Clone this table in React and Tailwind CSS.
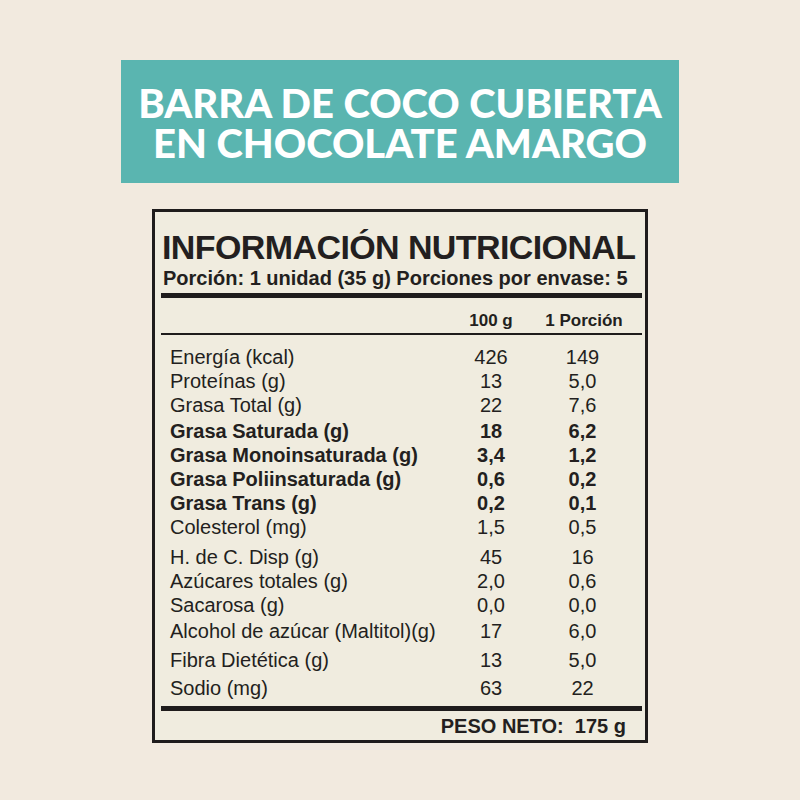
import React from "react";

const rows = [
	{ label: "Energía (kcal)", a: "426", b: "149", gap: "" },
	{ label: "Proteínas (g)", a: "13", b: "5,0", gap: "" },
	{ label: "Grasa Total (g)", a: "22", b: "7,6", gap: "" },
	{ label: "Grasa Saturada (g)", a: "18", b: "6,2", gap: "mt-[2px]", bold: true },
	{ label: "Grasa Monoinsaturada (g)", a: "3,4", b: "1,2", gap: "", bold: true },
	{ label: "Grasa Poliinsaturada (g)", a: "0,6", b: "0,2", gap: "", bold: true },
	{ label: "Grasa Trans (g)", a: "0,2", b: "0,1", gap: "", bold: true },
	{ label: "Colesterol (mg)", a: "1,5", b: "0,5", gap: "" },
	{ label: "H. de C. Disp (g)", a: "45", b: "16", gap: "mt-[6px]" },
	{ label: "Azúcares totales (g)", a: "2,0", b: "0,6", gap: "" },
	{ label: "Sacarosa (g)", a: "0,0", b: "0,0", gap: "" },
	{ label: "Alcohol de azúcar (Maltitol)(g)", a: "17", b: "6,0", gap: "mt-[2px]" },
	{ label: "Fibra Dietética (g)", a: "13", b: "5,0", gap: "mt-[5px]" },
	{ label: "Sodio (mg)", a: "63", b: "22", gap: "mt-[4px]" },
];

const App = () => {
	return (
		<div className="w-[800px] h-[800px] bg-[#f2eadf] flex flex-col items-center pt-[60px] text-[#231f20]">
			{/* Product name */}
			<div className="w-[558px] h-[123px] bg-[#5ab5b0] flex items-center justify-center">
				<h2 className="pt-[2px] text-center text-white font-black text-[40px] leading-[40px] whitespace-nowrap font-['Lato',sans-serif]">
					BARRA DE COCO CUBIERTA
					<br />
					EN CHOCOLATE AMARGO
				</h2>
			</div>

			{/* Nutrition table */}
			<div className="mt-[26px] w-[496px] border-[3px] border-[#1f1c1c] bg-[#f0ecdf] font-['Liberation_Sans',Arial,sans-serif] pb-[4px]">
				<h1 className="pt-[18px] pl-[7px] text-[34px] leading-[34px] font-bold tracking-[-0.6px]">
					INFORMACIÓN NUTRICIONAL
				</h1>
				<p className="mt-[4px] pl-[8px] text-[20px] leading-[20px] font-bold">
					Porción: 1 unidad (35 g) Porciones por envase: 5
				</p>
				<div className="mt-[5px] ml-[6px] mr-[3px] h-[5px] bg-[#1f1c1c]"></div>

				<div className="flex pt-[14px] pb-[4px] pl-[15px] pr-[21px] text-[17px] leading-[17px] font-bold">
					<div className="flex-1"></div>
					<div className="w-[80px] text-center">100 g</div>
					<div className="w-[80px] ml-[13px] text-center">1 Porción</div>
				</div>
				<div className="ml-[6px] mr-[3px] h-[2px] bg-[#1f1c1c]"></div>

				<div className="mt-[10px] flex flex-col">
					{rows.map((row, i) => (
						<div
							key={i}
							className={`${row.gap} flex h-[24px] items-center pl-[15px] pr-[21px] text-[20px] leading-[24px] ${row.bold ? "font-bold" : "font-normal"}`}
						>
							<div className="flex-1 whitespace-nowrap">{row.label}</div>
							<div className="w-[80px] text-center">{row.a}</div>
							<div className="w-[80px] ml-[13px] text-center pr-[3px]">{row.b}</div>
						</div>
					))}
				</div>

				<div className="mt-[6px] ml-[6px] mr-[3px] h-[5px] bg-[#1f1c1c]"></div>
				<p className="pt-[5px] pr-[19px] text-right text-[20px] leading-[20px] font-bold whitespace-pre">
					PESO NETO:  175 g
				</p>
			</div>
		</div>
	);
};

export default App;
